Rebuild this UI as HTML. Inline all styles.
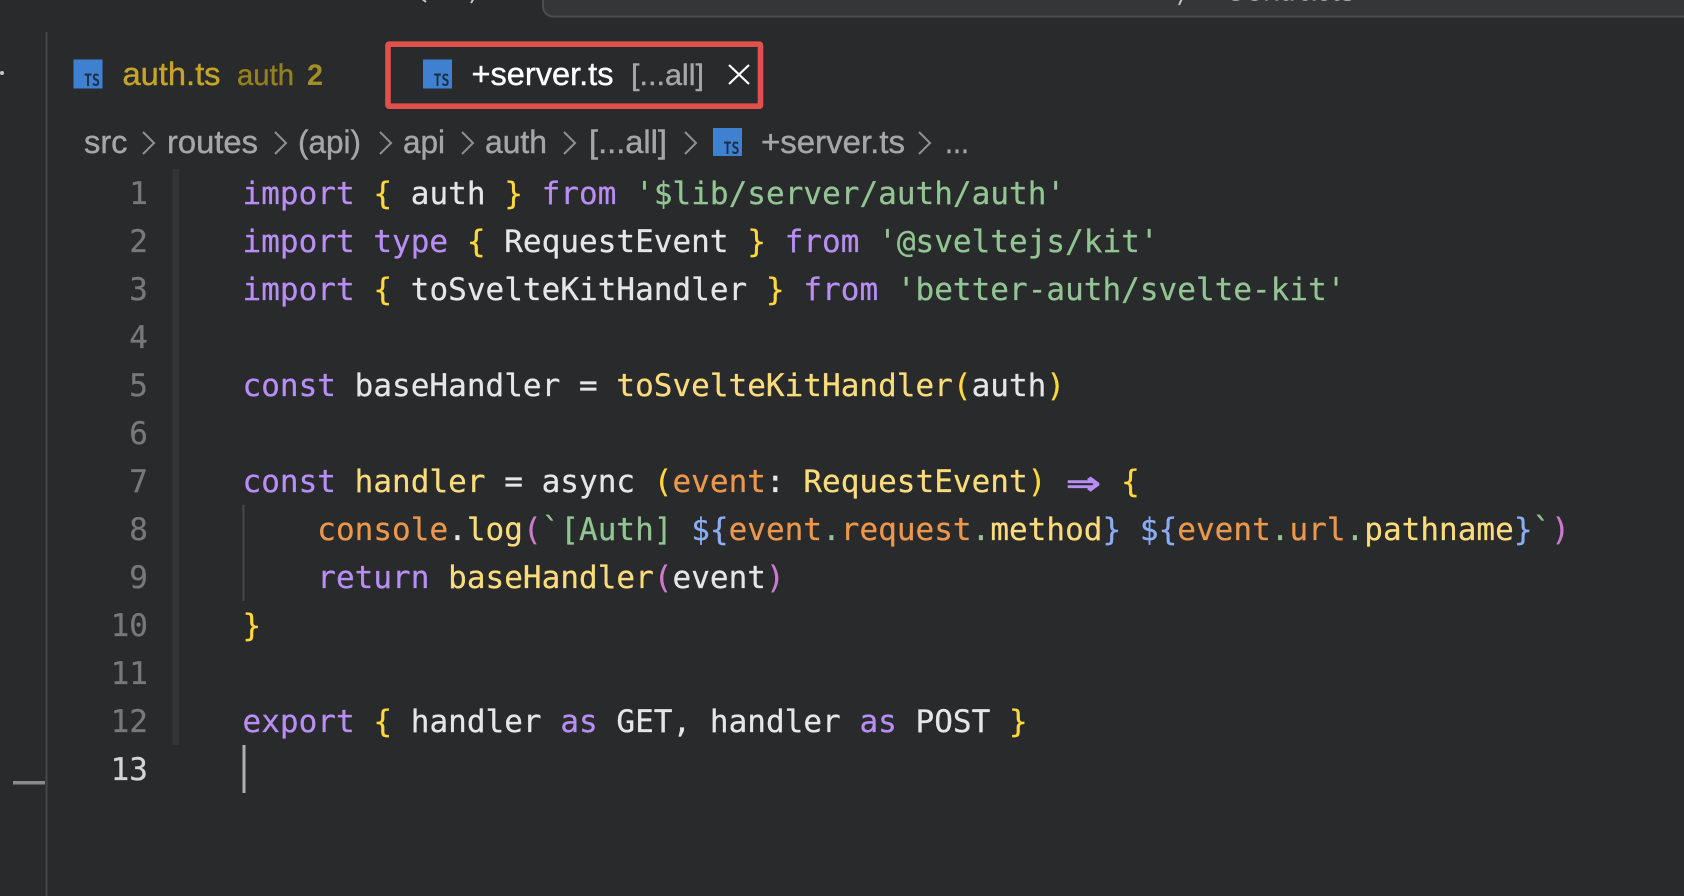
<!DOCTYPE html>
<html>
<head>
<meta charset="utf-8">
<style>
html,body{margin:0;padding:0;background:#292a2c;width:1684px;height:896px;overflow:hidden}
#root{position:relative;width:1684px;height:896px;overflow:hidden;background:#292a2c}
svg{position:absolute;left:0;top:0}
.s{font-family:"Liberation Sans",sans-serif;font-size:32px;stroke-width:.4px}
.ts{font-family:"DejaVu Sans Mono",monospace;font-size:16.5px;font-weight:700;fill:#1c2f47}
pre{position:absolute;margin:0;font-family:"DejaVu Sans Mono","Liberation Mono",monospace;font-size:31px;line-height:48px;letter-spacing:.03px;-webkit-text-stroke:.25px}
#nums{left:90px;top:169.5px;width:58px;text-align:right;color:#77787a}
#code{left:242.5px;top:169.5px;color:#e6e6e6}
.k{color:#b88ef5}.b{color:#ffd83c}.g{color:#93c493}.y{color:#fbdc7c}.o{color:#ec984c}.p{color:#cc7ad0}.u{color:#8aaef5}
.ar{display:inline-block;width:2ch;text-align:center;transform:scale(1.8,1.35);-webkit-text-stroke:.9px;color:#b88ef5}
</style>
</head>
<body>
<div id="root">
<svg width="1684" height="896" viewBox="0 0 1684 896">
  <!-- top bar -->
  <rect x="543" y="-20" width="1200" height="36.5" rx="10" fill="#353638" stroke="#4c4d4f" stroke-width="2"/>
  <path d="M421 -2 L426 2 M474 -2 L471 3 M1185 -8 L1179 5" stroke="#c4c4c4" stroke-width="2" fill="none"/>
  <text x="1224" y="0.5" class="s" fill="#c8c8c8" textLength="131" lengthAdjust="spacingAndGlyphs">Contracts</text>
  <!-- left rail -->
  <rect x="45.5" y="32" width="2" height="864" fill="#454648"/>
  <rect x="13" y="781" width="32" height="3.5" fill="#8a8a8a"/>
  <circle cx="2" cy="73" r="2" fill="#c8c8c8"/>
  <!-- gutter bar -->
  <rect x="172.5" y="169" width="6.5" height="576" fill="#343539"/>
  <!-- indent guide -->
  <rect x="242.5" y="505" width="2" height="96" fill="#47484a"/>
  <!-- caret -->
  <rect x="242.5" y="745" width="3" height="48" fill="#aeaeae"/>
  <!-- auth.ts tab -->
  <rect x="73.5" y="59.5" width="29" height="29" fill="#3f81d0"/>
  <text x="84" y="86" class="ts" textLength="16" lengthAdjust="spacingAndGlyphs">TS</text>
  <text x="122.5" y="85" class="s" fill="#c6a527" stroke="#c6a527" textLength="98" lengthAdjust="spacingAndGlyphs">auth.ts</text>
  <text x="237" y="85" class="s" style="font-size:30px" fill="#93801f" stroke="#93801f" textLength="57" lengthAdjust="spacingAndGlyphs">auth</text>
  <text x="307" y="85" class="s" style="font-size:30px;font-weight:700" fill="#a58d26" textLength="16" lengthAdjust="spacingAndGlyphs">2</text>
  <!-- red box -->
  <rect x="388" y="44.2" width="372.5" height="62" rx="1" fill="none" stroke="#e2504c" stroke-width="5.6"/>
  <rect x="423" y="59.5" width="29" height="29" fill="#3f81d0"/>
  <text x="433.5" y="86" class="ts" textLength="16" lengthAdjust="spacingAndGlyphs">TS</text>
  <text x="471.5" y="85" class="s" fill="#ffffff" stroke="#ffffff" textLength="142" lengthAdjust="spacingAndGlyphs">+server.ts</text>
  <text x="631" y="85" class="s" style="font-size:30px" fill="#a6a6a6" stroke="#a6a6a6" textLength="73" lengthAdjust="spacingAndGlyphs">[...all]</text>
  <path d="M729 65 L749 84 M749 65 L729 84" stroke="#ffffff" stroke-width="2.2" fill="none"/>
  <!-- breadcrumb -->
  <g class="s" fill="#a6a6a6" stroke="#a6a6a6">
    <text x="84" y="153" textLength="43.5" lengthAdjust="spacingAndGlyphs">src</text>
    <text x="167" y="153" textLength="91" lengthAdjust="spacingAndGlyphs">routes</text>
    <text x="298" y="153" textLength="63" lengthAdjust="spacingAndGlyphs">(api)</text>
    <text x="403" y="153" textLength="42" lengthAdjust="spacingAndGlyphs">api</text>
    <text x="485" y="153" textLength="62" lengthAdjust="spacingAndGlyphs">auth</text>
    <text x="589" y="153" textLength="78" lengthAdjust="spacingAndGlyphs">[...all]</text>
    <text x="761" y="153" textLength="144" lengthAdjust="spacingAndGlyphs">+server.ts</text>
    <text x="945" y="153" textLength="24" lengthAdjust="spacingAndGlyphs">...</text>
  </g>
  <g fill="none" stroke="#8f8f8f" stroke-width="2">
    <path d="M143 132 L154 143 L143 154"/>
    <path d="M275 132 L286 143 L275 154"/>
    <path d="M380 132 L391 143 L380 154"/>
    <path d="M462 132 L473 143 L462 154"/>
    <path d="M564 132 L575 143 L564 154"/>
    <path d="M685 132 L696 143 L685 154"/>
    <path d="M919 132 L930 143 L919 154"/>
  </g>
  <rect x="713" y="128" width="29" height="28" fill="#3f81d0"/>
  <text x="723.5" y="154" class="ts" textLength="16" lengthAdjust="spacingAndGlyphs">TS</text>
</svg>
<pre id="nums">1
2
3
4
5
6
7
8
9
10
11
12
<span style="color:#d4d4d4">13</span></pre>
<pre id="code"><span class="k">import</span> <span class="b">{</span> auth <span class="b">}</span> <span class="k">from</span> <span class="g">'$lib/server/auth/auth'</span>
<span class="k">import type</span> <span class="b">{</span> RequestEvent <span class="b">}</span> <span class="k">from</span> <span class="g">'@sveltejs/kit'</span>
<span class="k">import</span> <span class="b">{</span> toSvelteKitHandler <span class="b">}</span> <span class="k">from</span> <span class="g">'better-auth/svelte-kit'</span>

<span class="k">const</span> baseHandler = <span class="y">toSvelteKitHandler</span><span class="b">(</span>auth<span class="b">)</span>

<span class="k">const</span> <span class="y">handler</span> = async <span class="b">(</span><span class="o">event</span>: <span class="y">RequestEvent</span><span class="b">)</span> <span class="ar">⇒</span> <span class="b">{</span>
    <span class="o">console</span>.<span class="y">log</span><span class="p">(</span><span class="g">`[Auth] </span><span class="u">${</span><span class="o">event</span><span class="g">.</span><span class="o">request</span><span class="g">.</span><span class="y">method</span><span class="u">}</span> <span class="u">${</span><span class="o">event</span><span class="g">.</span><span class="o">url</span><span class="g">.</span><span class="y">pathname</span><span class="u">}</span><span class="g">`</span><span class="p">)</span>
    <span class="k">return</span> <span class="y">baseHandler</span><span class="p">(</span>event<span class="p">)</span>
<span class="b">}</span>

<span class="k">export</span> <span class="b">{</span> handler <span class="k">as</span> GET, handler <span class="k">as</span> POST <span class="b">}</span>
</pre>
</div>
</body>
</html>
